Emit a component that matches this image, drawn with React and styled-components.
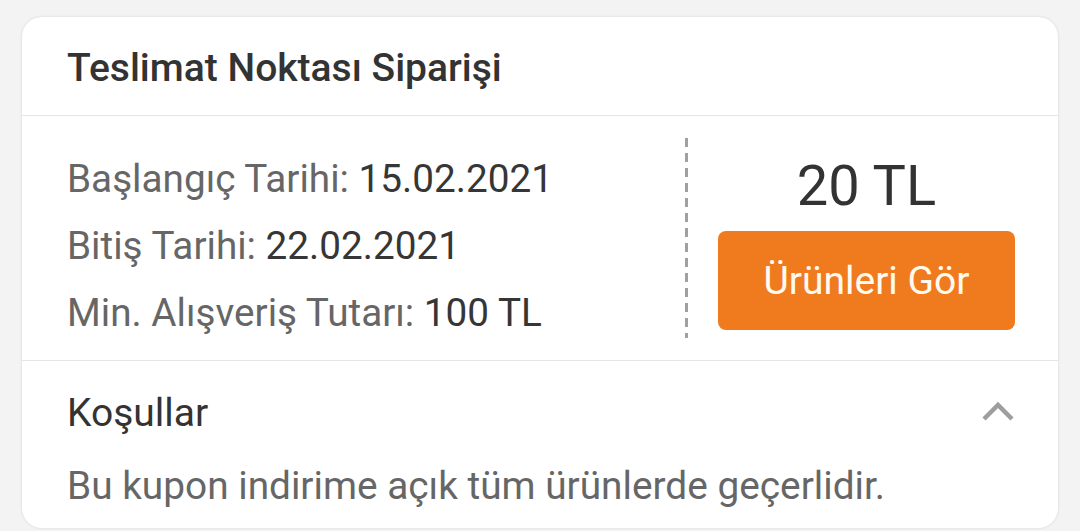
import React from 'react';
import styled, { createGlobalStyle } from 'styled-components';

const GlobalStyle = createGlobalStyle`
  html, body {
    margin: 0;
    padding: 0;
    background: #f3f3f3;
  }
  * {
    box-sizing: border-box;
  }
`;

const Page = styled.div`
  padding: 17px 22px 0 22px;
  height: 531px;
  overflow: hidden;
  font-family: Roboto, 'Noto Sans', sans-serif;
`;

const Card = styled.div`
  background: #fff;
  border-radius: 20px;
  box-shadow: 0 0 3px rgba(0, 0, 0, 0.12);
  height: 511px;
  display: flex;
  flex-direction: column;
`;

const Header = styled.div`
  height: 99px;
  display: flex;
  align-items: center;
  padding: 4px 45px 0;
  border-bottom: 1px solid #e6e6e6;
`;

const Title = styled.h1`
  margin: 0;
  font-size: 39px;
  font-weight: 500;
  color: #333;
`;

const Body = styled.div`
  display: flex;
  height: 245px;
  border-bottom: 1px solid #e6e6e6;
`;

const InfoList = styled.div`
  flex: 1;
  padding: 29px 0 14px 45px;
`;

const InfoRow = styled.div`
  font-size: 38.7px;
  line-height: 67px;
  color: #666;
  white-space: nowrap;
`;

const Value = styled.span`
  color: #363636;
`;

const Divider = styled.div`
  width: 3px;
  margin: 22px 0 22px;
  background: repeating-linear-gradient(
    to bottom,
    #a0a0a0 0 9px,
    transparent 9px 15px
  );
`;

const PricePanel = styled.div`
  width: 370px;
  padding: 37px 43px 0 30px;
  display: flex;
  flex-direction: column;
  align-items: center;
`;

const Price = styled.div`
  font-size: 56px;
  line-height: 66px;
  color: #333;
  margin-bottom: 12px;
`;

const ActionButton = styled.button`
  width: 297px;
  height: 99px;
  border: none;
  border-radius: 8px;
  background: #f07b1f;
  color: #fffaf0;
  font-family: Roboto, 'Noto Sans', sans-serif;
  font-size: 39px;
  cursor: pointer;
`;

const Terms = styled.div`
  padding: 24px 45px 0 45px;
`;

const TermsHead = styled.div`
  display: flex;
  align-items: center;
  justify-content: space-between;
  height: 56px;
`;

const TermsTitle = styled.div`
  font-size: 39px;
  color: #333;
`;

const Chevron = styled.svg`
  width: 34px;
  height: 24px;
  margin-right: -2px;
  margin-top: -4px;
`;

const TermsText = styled.p`
  margin: 22px 0 0;
  font-size: 38.8px;
  color: #666;
  white-space: nowrap;
`;

const info = [
  { label: 'Başlangıç Tarihi:', value: '15.02.2021' },
  { label: 'Bitiş Tarihi:', value: '22.02.2021' },
  { label: 'Min. Alışveriş Tutarı:', value: '100 TL' },
];

export default function App() {
  return (
    <>
      <GlobalStyle />
      <Page>
        <Card>
          <Header>
            <Title>Teslimat Noktası Siparişi</Title>
          </Header>
          <Body>
            <InfoList>
              {info.map((row) => (
                <InfoRow key={row.label}>
                  {row.label} <Value>{row.value}</Value>
                </InfoRow>
              ))}
            </InfoList>
            <Divider />
            <PricePanel>
              <Price>20 TL</Price>
              <ActionButton>Ürünleri Gör</ActionButton>
            </PricePanel>
          </Body>
          <Terms>
            <TermsHead>
              <TermsTitle>Koşullar</TermsTitle>
              <Chevron viewBox="0 0 34 24">
                <polyline
                  points="3,20 17,6 31,20"
                  fill="none"
                  stroke="#9e9e9e"
                  strokeWidth="4.5"
                />
              </Chevron>
            </TermsHead>
            <TermsText>Bu kupon indirime açık tüm ürünlerde geçerlidir.</TermsText>
          </Terms>
        </Card>
      </Page>
    </>
  );
}
